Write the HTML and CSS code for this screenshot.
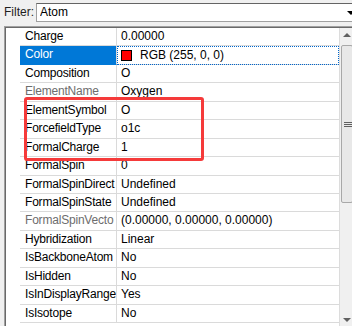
FILE: index.html
```html
<!DOCTYPE html>
<html lang="en">
<head>
  <meta charset="UTF-8">
  <title>Properties</title>
  <link rel="stylesheet" href="styles.css">
</head>
<body>
  <div class="filter-bar">
    <label for="filter">Filter:</label>
    <div class="combo">
      <input id="filter" value="Atom">
      <span class="combo-btn"></span>
    </div>
  </div>

  <div class="grid-box">
    <div class="grid">
      <div class="row"><span class="hdr"></span><span class="name">Charge</span><span class="val">0.00000</span></div>
      <div class="row selected"><span class="hdr"></span><span class="name">Color</span><span class="val"><i class="swatch"></i>RGB (255, 0, 0)</span></div>
      <div class="row"><span class="hdr"></span><span class="name">Composition</span><span class="val">O</span></div>
      <div class="row"><span class="hdr"></span><span class="name dim">ElementName</span><span class="val">Oxygen</span></div>
      <div class="row"><span class="hdr"></span><span class="name">ElementSymbol</span><span class="val">O</span></div>
      <div class="row"><span class="hdr"></span><span class="name">ForcefieldType</span><span class="val">o1c</span></div>
      <div class="row"><span class="hdr"></span><span class="name">FormalCharge</span><span class="val">1</span></div>
      <div class="row"><span class="hdr"></span><span class="name">FormalSpin</span><span class="val">0</span></div>
      <div class="row"><span class="hdr"></span><span class="name">FormalSpinDirect</span><span class="val">Undefined</span></div>
      <div class="row"><span class="hdr"></span><span class="name">FormalSpinState</span><span class="val">Undefined</span></div>
      <div class="row"><span class="hdr"></span><span class="name dim">FormalSpinVecto</span><span class="val">(0.00000, 0.00000, 0.00000)</span></div>
      <div class="row"><span class="hdr"></span><span class="name">Hybridization</span><span class="val">Linear</span></div>
      <div class="row"><span class="hdr"></span><span class="name">IsBackboneAtom</span><span class="val">No</span></div>
      <div class="row"><span class="hdr"></span><span class="name">IsHidden</span><span class="val">No</span></div>
      <div class="row"><span class="hdr"></span><span class="name">IsInDisplayRange</span><span class="val">Yes</span></div>
      <div class="row"><span class="hdr"></span><span class="name">IsIsotope</span><span class="val">No</span></div>
    </div>
    <div class="scrollbar">
      <span class="arrow up"></span>
      <div class="thumb"><span class="grip"></span></div>
      <span class="arrow down"></span>
    </div>
    <div class="highlight"></div>
  </div>
</body>
</html>
```

FILE: styles.css
```css
body {
  margin: 0;
  width: 352px;
  height: 326px;
  overflow: hidden;
  background: #f0f0f0;
  font-family: 'Liberation Sans', Arial, sans-serif;
  font-size: 12px;
  color: #000;
}
.filter-bar {
  display: flex;
  align-items: center;
  height: 24px;
  padding-left: 4px;
}
.filter-bar label {
  width: 32px;
  color: #1e1e1e;
}
.combo {
  position: relative;
  flex: 1;
  margin-right: -6px;
  height: 19px;
  box-sizing: border-box;
  border: 1px solid #a0a0a0;
  border-top-color: #646464;
  background: #fff;
}
.combo input {
  border: none;
  outline: none;
  padding: 0 0 0 3px;
  height: 17px;
  font: inherit;
  width: 280px;
}
.combo-btn {
  position: absolute;
  right: 2px;
  top: 7px;
  width: 0;
  height: 0;
  border-left: 4px solid transparent;
  border-right: 4px solid transparent;
  border-top: 4px solid #000;
}
.grid-box {
  position: relative;
  display: flex;
  margin: 2px 0 0 4px;
  height: 310px;
  border-top: 1px solid #a0a0a0;
  border-left: 1px solid #a0a0a0;
  box-shadow: inset 1px 1px 0 #696969;
  padding: 1px 0 0 1px;
}
.grid {
  width: 337px;
  background: #fff;
}
.row {
  display: grid;
  grid-template-columns: 14px 97px 1fr;
  height: 18.44px;
  line-height: 17px;
}
.name, .val {
  border-bottom: 1px solid #dadada;
  white-space: nowrap;
  overflow: hidden;
}
.name {
  padding-left: 5px;
  letter-spacing: -0.2px;
  border-right: 1px solid #dadada;
}
.val {
  padding-left: 4px;
}
.dim {
  color: #6d6d6d;
}
.selected .name {
  background: #0078d7;
  color: #fff;
  border-bottom-color: #0078d7;
}
.selected .val {
  outline: 1px dotted #0066cc;
  outline-offset: -1px;
  display: flex;
  align-items: center;
}
.swatch {
  width: 11px;
  height: 11px;
  box-sizing: border-box;
  background: #ff0000;
  border: 1px solid #000;
  margin: 0 8px 0 0;
}
.scrollbar {
  position: relative;
  width: 12px;
  background: #f0f0f0;
  border-left: 1px solid #dcdcdc;
}
.thumb {
  position: absolute;
  left: 1px;
  top: 17px;
  width: 12px;
  height: 158px;
  box-sizing: border-box;
  border: 1px solid #a8a8a8;
  border-radius: 2px;
  background: #e8e8e8;
}
.grip {
  position: absolute;
  left: 2px;
  top: 76px;
  width: 8px;
  height: 5px;
  border-top: 1px solid #606060;
  border-bottom: 1px solid #606060;
  box-sizing: border-box;
}
.grip::after {
  content: '';
  position: absolute;
  left: 0;
  top: 1px;
  width: 8px;
  border-top: 1px solid #606060;
}
.arrow {
  position: absolute;
  left: 3px;
  width: 0;
  height: 0;
  border-left: 4px solid transparent;
  border-right: 4px solid transparent;
}
.arrow.up {
  top: 5px;
  border-bottom: 4px solid #606060;
}
.arrow.down {
  top: 290px;
  border-top: 4px solid #606060;
}
.highlight {
  position: absolute;
  left: 19px;
  top: 70px;
  width: 174px;
  height: 58px;
  border: 3px solid #f53a3a;
  border-radius: 3px;
}
```
